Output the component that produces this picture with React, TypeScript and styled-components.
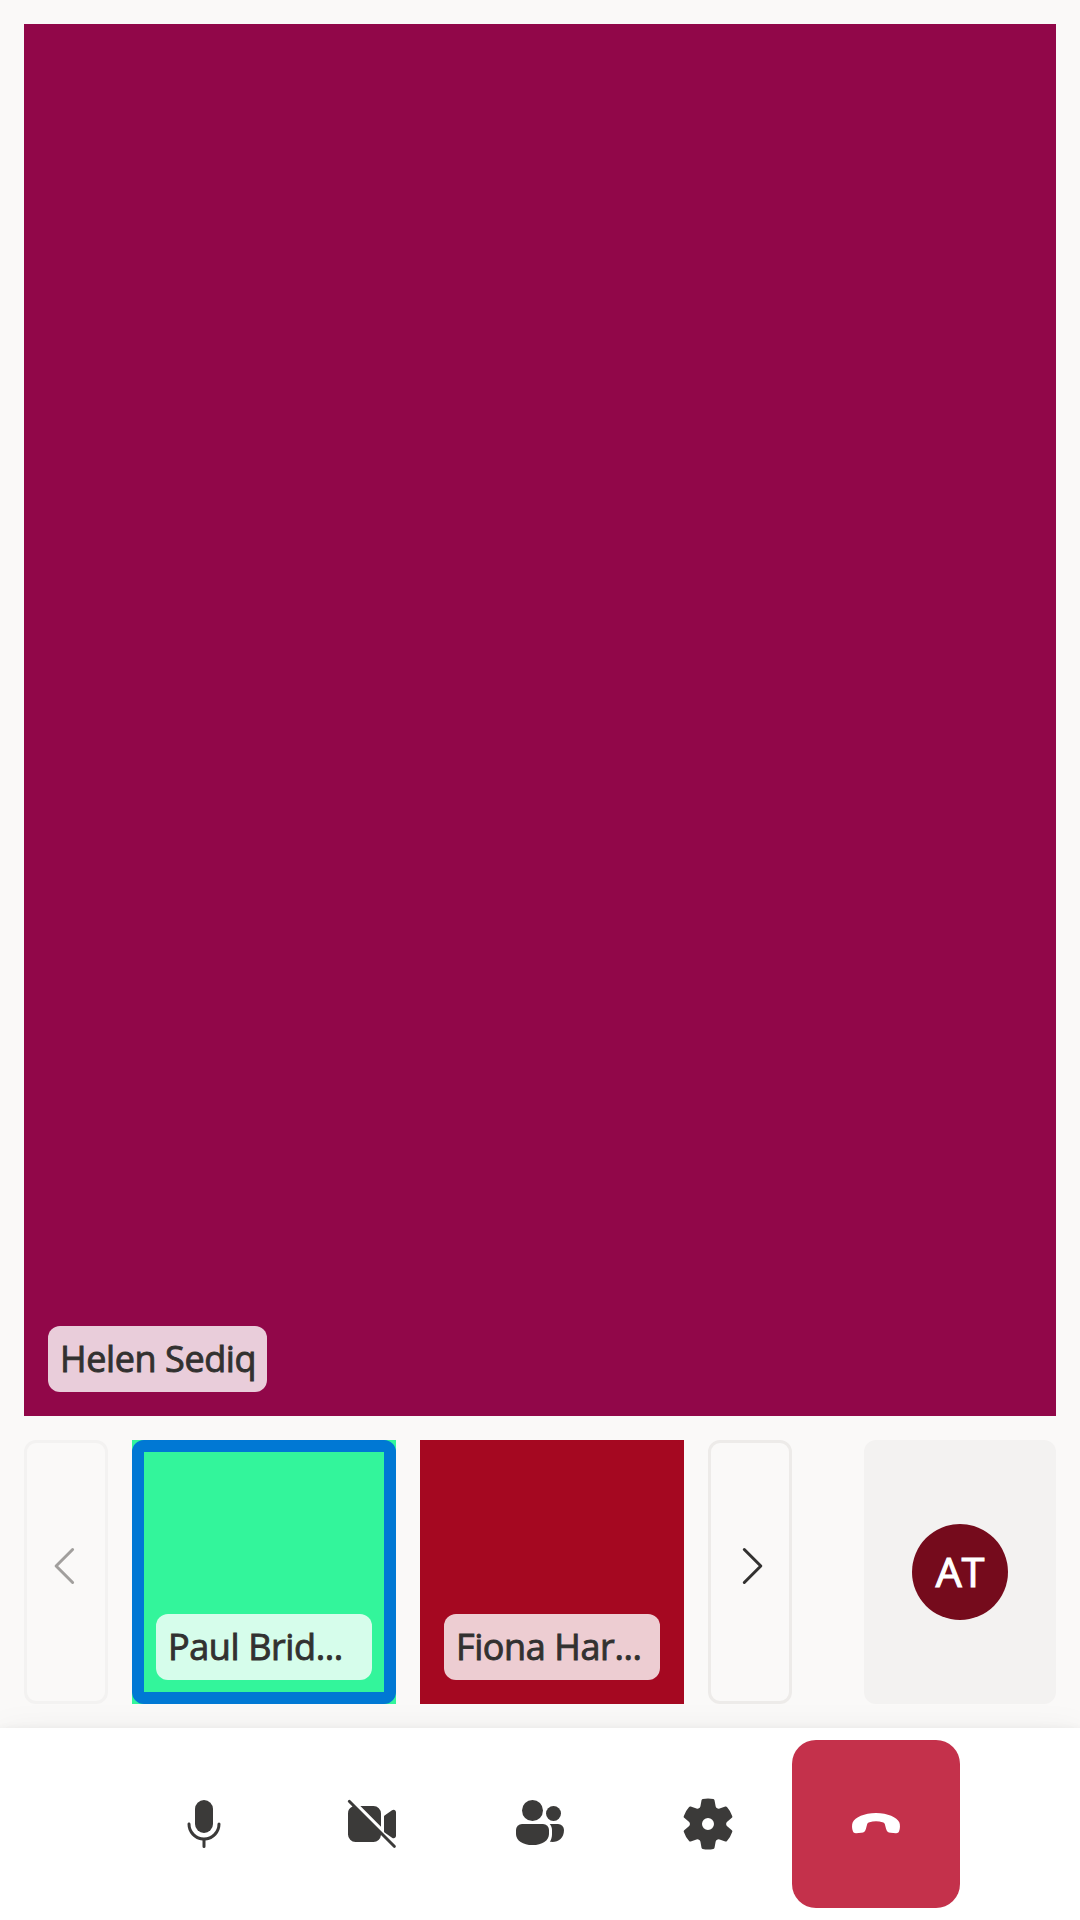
import React from "react";
import styled, { createGlobalStyle } from "styled-components";

const GlobalStyle = createGlobalStyle`
  body { margin: 0; background: #faf9f8; }
  *, *::before, *::after { box-sizing: border-box; }
`;

const Page = styled.div`
  width: 1080px;
  height: 1920px;
  display: flex;
  flex-direction: column;
  overflow: hidden;
  background: #faf9f8;
  color: #323130;
  font-family: "Open Sans", "Noto Sans", sans-serif;
`;

const Stage = styled.main`
  flex: 1;
  min-height: 0;
  padding: 24px;
  display: flex;
  flex-direction: column;
  gap: 24px;
`;

const VideoTile = styled.section<{ $color: string }>`
  flex: 1;
  min-height: 0;
  padding: 24px;
  display: flex;
  align-items: flex-end;
  background: ${(p) => p.$color};
`;

const ThumbTile = styled(VideoTile)`
  flex: 0 0 264px;
  position: relative;
`;

const SpeakingFrame = styled.div`
  position: absolute;
  inset: 0;
  overflow: hidden;
  border-radius: 12px;
  border: 12px solid #0078d4;
`;

const NameTag = styled.div<{ $fill?: boolean; $spacing: number }>`
  position: relative;
  width: ${(p) => (p.$fill ? "100%" : "219px")};
  height: 66px;
  padding: 0 12px;
  border-radius: 12px;
  background: rgba(255, 255, 255, 0.8);
  font-size: 36px;
  font-weight: 400;
  -webkit-text-stroke: 0.9px currentColor;
  line-height: 65px;
  letter-spacing: ${(p) => p.$spacing}px;
  white-space: nowrap;
`;

const Gallery = styled.div`
  height: 264px;
  display: flex;
  justify-content: space-between;
`;

const Carousel = styled.div`
  display: flex;
  gap: 24px;
`;

const PageButton = styled.button`
  width: 84px;
  padding: 0 0 12px;
  display: flex;
  align-items: center;
  justify-content: center;
  background: transparent;
  border: 3px solid #edebe9;
  border-radius: 12px;
  color: #323130;

  &:disabled {
    border-color: #f3f2f1;
    color: #a19f9d;
  }
`;

const LocalTile = styled.div`
  width: 192px;
  display: flex;
  align-items: center;
  justify-content: center;
  border-radius: 12px;
  background: #f3f2f1;
`;

const Avatar = styled.div`
  width: 96px;
  height: 96px;
  border-radius: 50%;
  background: #750b1c;
  color: #fff;
  font-size: 41px;
  font-weight: 400;
  -webkit-text-stroke: 1.2px currentColor;
  line-height: 95px;
  text-align: center;
`;

const ControlBar = styled.nav`
  height: 192px;
  display: flex;
  align-items: center;
  justify-content: center;
  background: #fff;
  box-shadow: 0 19.2px 43.2px rgba(0, 0, 0, 0.132), 0 3.6px 10.8px rgba(0, 0, 0, 0.108);
`;

const ControlButton = styled.button<{ $danger?: boolean }>`
  width: 168px;
  height: 168px;
  padding: 0;
  display: flex;
  align-items: center;
  justify-content: center;
  border: 0;
  border-radius: 24px;
  background: ${(p) => (p.$danger ? "#c4314b" : "transparent")};
  color: ${(p) => (p.$danger ? "#fff" : "#3b3a39")};
`;

const IconSvg = styled.svg`
  width: 60px;
  height: 60px;
  flex: none;
  fill: currentColor;
`;

const Stroke = styled.path`
  fill: none;
  stroke: currentColor;
  stroke-width: 1;
  stroke-linecap: round;
  stroke-linejoin: round;
`;

const Icon = ({ children }: { children: React.ReactNode }) => (
  <IconSvg viewBox="0 0 20 20" aria-hidden="true">{children}</IconSvg>
);

export default function App() {
  return (
    <Page>
      <GlobalStyle />
      <Stage>
        <VideoTile $color="#910749">
          <NameTag $spacing={-0.4}>Helen Sediq</NameTag>
        </VideoTile>
        <Gallery>
          <Carousel>
            <PageButton disabled aria-label="Previous">
              <Icon><Stroke d="M12.2 4.5 6.7 10l5.5 5.5" /></Icon>
            </PageButton>
            <ThumbTile $color="#33f59b">
              <SpeakingFrame />
              <NameTag $fill $spacing={-0.4}>Paul Brid...</NameTag>
            </ThumbTile>
            <ThumbTile $color="#a50821">
              <NameTag $fill $spacing={-0.4}>Fiona Har...</NameTag>
            </ThumbTile>
            <PageButton aria-label="Next">
              <Icon><Stroke d="M8.1 4.5 13.6 10l-5.5 5.5" /></Icon>
            </PageButton>
          </Carousel>
          <LocalTile>
            <Avatar>AT</Avatar>
          </LocalTile>
        </Gallery>
      </Stage>
      <ControlBar>
        <ControlButton aria-label="Microphone">
          <Icon>
            <path d="M10 13a3 3 0 0 0 3-3V5a3 3 0 0 0-6 0v5a3 3 0 0 0 3 3Z" />
            <path d="M5 9.5c.28 0 .5.22.5.5a4.5 4.5 0 0 0 9 0 .5.5 0 0 1 1 0 5.5 5.5 0 0 1-5 5.48v2.02a.5.5 0 0 1-1 0v-2.02a5.5 5.5 0 0 1-5-5.48c0-.28.22-.5.5-.5Z" />
          </Icon>
        </ControlButton>
        <ControlButton aria-label="Camera off">
          <Icon>
            <path d="M2.85 2.15a.5.5 0 1 0-.7.7L3.5 4.2A2.5 2.5 0 0 0 2 6.5v7A2.5 2.5 0 0 0 4.5 16h6a2.5 2.5 0 0 0 2.49-2.3l4.16 4.15a.5.5 0 0 0 .7-.7l-15-15Z" />
            <path d="M13 6.5v4.38L6.12 4h4.38A2.5 2.5 0 0 1 13 6.5Z" />
            <path d="M14 7.6v4.8c0 .15.07.3.18.4l2.5 1.75c.55.45 1.32.1 1.32-.6v-7.9c0-.7-.77-1.05-1.32-.6L14.18 7.2a.5.5 0 0 0-.18.4Z" />
          </Icon>
        </ControlButton>
        <ControlButton aria-label="People">
          <Icon>
            <circle cx="7.5" cy="5.5" r="3.5" />
            <circle cx="14.5" cy="6.5" r="2.5" />
            <path d="M2 12a2 2 0 0 1 2-2h7a2 2 0 0 1 2 2v1.3C13 15.5 10.7 17 7.5 17S2 15.5 2 13.3V12Z" />
            <path d="M13.24 10H16a2 2 0 0 1 2 2c0 2.6-1.75 4-3.9 4-.28 0-.56-.02-.82-.05.47-.76.72-1.62.72-2.55V12c0-.77-.29-1.47-.76-2Z" />
          </Icon>
        </ControlButton>
        <ControlButton aria-label="Settings">
          <Icon>
            <path d="M1.91 7.38A8.5 8.5 0 0 1 3.7 4.3a.5.5 0 0 1 .54-.13l1.92.68a1 1 0 0 0 1.32-.76l.36-2a.5.5 0 0 1 .4-.4 8.53 8.53 0 0 1 3.55 0c.2.04.35.2.38.4l.37 2a1 1 0 0 0 1.32.76l1.92-.68a.5.5 0 0 1 .54.13 8.5 8.5 0 0 1 1.78 3.08c.06.2 0 .4-.15.54l-1.56 1.32a1 1 0 0 0 0 1.52l1.56 1.32a.5.5 0 0 1 .15.54 8.5 8.5 0 0 1-1.78 3.08.5.5 0 0 1-.54.13l-1.92-.68a1 1 0 0 0-1.32.76l-.37 2a.5.5 0 0 1-.38.4 8.53 8.53 0 0 1-3.56 0 .5.5 0 0 1-.39-.4l-.36-2a1 1 0 0 0-1.32-.76l-1.92.68a.5.5 0 0 1-.54-.13 8.5 8.5 0 0 1-1.78-3.08.5.5 0 0 1 .15-.54l1.56-1.32a1 1 0 0 0 0-1.52L2.06 7.92a.5.5 0 0 1-.15-.54ZM8 10a2 2 0 1 0 4 0 2 2 0 0 0-4 0Z" />
          </Icon>
        </ControlButton>
        <ControlButton $danger aria-label="Leave call">
          <Icon>
            <path d="M10 6.33c3.9 0 7 1.5 7.75 3.1.35.75.3 2.15-.05 3-.22.52-.55.68-1.1.65l-1.7-.13c-.95-.08-1.3-.6-1.55-1.4l-.4-1.45c-.12-.42-.35-.57-.8-.72-.65-.2-1.35-.28-2.15-.28s-1.5.08-2.15.28c-.45.15-.68.3-.8.72l-.4 1.45c-.25.8-.6 1.32-1.55 1.4l-1.7.13c-.55.03-.88-.13-1.1-.65-.35-.85-.4-2.25-.05-3 .75-1.6 3.85-3.1 7.75-3.1Z" />
          </Icon>
        </ControlButton>
      </ControlBar>
    </Page>
  );
}
